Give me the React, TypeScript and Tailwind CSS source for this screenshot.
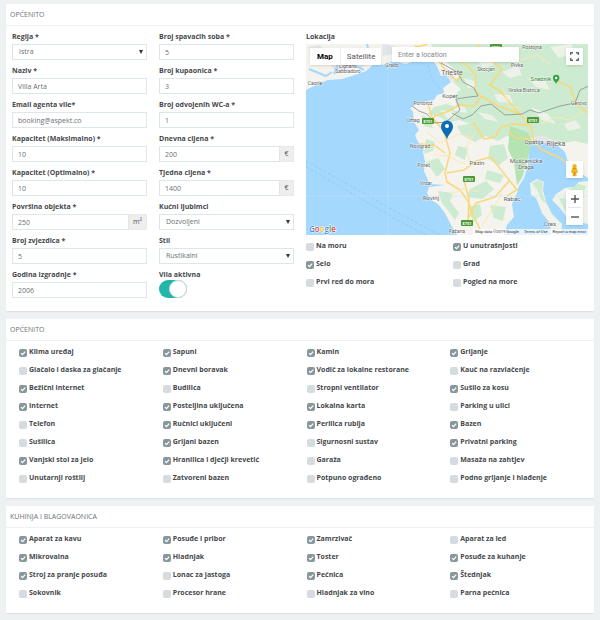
import { useId, type ReactNode } from 'react';

type Option = [label: string, checked: boolean];

const LOCATION: Option[] = [
  ['Na moru', false], ['U unutrašnjosti', true],
  ['Selo', true], ['Grad', false],
  ['Prvi red do mora', false], ['Pogled na more', false],
];

const GENERAL: Option[] = [
  ['Klima uređaj', true], ['Sapuni', true], ['Kamin', true], ['Grijanje', true],
  ['Glačalo i daska za glačanje', false], ['Dnevni boravak', true], ['Vodič za lokalne restorane', true], ['Kauč na razvlačenje', false],
  ['Bežični internet', true], ['Budilica', false], ['Stropni ventilator', false], ['Sušilo za kosu', true],
  ['Internet', true], ['Posteljina uključena', true], ['Lokalna karta', true], ['Parking u ulici', false],
  ['Telefon', false], ['Ručnici uključeni', true], ['Perilica rublja', true], ['Bazen', true],
  ['Sušilica', false], ['Grijani bazen', true], ['Sigurnosni sustav', false], ['Privatni parking', true],
  ['Vanjski stol za jelo', true], ['Hranilica i dječji krevetić', true], ['Garaža', false], ['Masaža na zahtjev', false],
  ['Unutarnji roštilj', false], ['Zatvoreni bazen', false], ['Potpuno ograđeno', false], ['Podno grijanje i hlađenje', false],
];

const KITCHEN: Option[] = [
  ['Aparat za kavu', true], ['Posuđe i pribor', true], ['Zamrzivač', true], ['Aparat za led', false],
  ['Mikrovalna', true], ['Hladnjak', true], ['Toster', true], ['Posuđe za kuhanje', true],
  ['Stroj za pranje posuđa', true], ['Lonac za jastoga', false], ['Pećnica', true], ['Štednjak', true],
  ['Sokovnik', false], ['Procesor hrane', false], ['Hladnjak za vino', false], ['Parna pećnica', false],
];

function Panel({ title, children }: { title: string; children: ReactNode }) {
  return (
    <section className="bg-white shadow-[0_1px_1px_#dde3e5]">
      <h2 className="h-[22px] border-b border-[#edf1f2] px-1 text-[7px] leading-[21px] font-normal text-[#6c7275] uppercase">{title}</h2>
      {children}
    </section>
  );
}

function Field({ label, value, unit }: { label: string; value: string; unit?: ReactNode }) {
  const id = useId();
  return (
    <div>
      <label htmlFor={id} className="block pb-0.5 text-[7px] leading-[10px] font-bold">{label}</label>
      <div className="flex h-4">
        <input id={id} defaultValue={value} className="h-4 w-full min-w-0 flex-1 border border-[#dde6e9] bg-white px-[5px] text-[7px] text-[#6b7073] outline-none" />
        {unit && <span className="flex min-w-[14px] items-center justify-center border border-l-0 border-[#e6eaec] bg-[#eeeeee] px-1 text-[7px] text-[#555]">{unit}</span>}
      </div>
    </div>
  );
}

function SelectField({ label, options }: { label: string; options: string[] }) {
  const id = useId();
  return (
    <div>
      <label htmlFor={id} className="block pb-0.5 text-[7px] leading-[10px] font-bold">{label}</label>
      <div className="relative h-4">
        <select id={id} className="block h-4 w-full appearance-none border border-[#dde6e9] bg-white pt-px pr-3 pl-1.5 text-[7px] text-[#6b7073] outline-none">
          {options.map((o) => <option key={o}>{o}</option>)}
        </select>
        <svg viewBox="0 0 4 4" className="pointer-events-none absolute top-1.5 right-1 size-1 fill-[#333]"><path d="M0 0h4L2 4z" /></svg>
      </div>
    </div>
  );
}

function Tick({ option: [label, checked] }: { option: Option }) {
  return (
    <label className="flex h-[18px] items-center gap-0.5 text-[7px] font-bold whitespace-nowrap">
      <span className="relative mt-0.5 size-2 shrink-0">
        <input type="checkbox" defaultChecked={checked} className="peer block size-2 appearance-none rounded-[2px] bg-[#d5dbde] checked:bg-[#87979c]" />
        <svg viewBox="0 0 8 8" className="pointer-events-none absolute inset-0 hidden size-2 peer-checked:block"><path d="M2 4.1l1.5 1.5L6.2 2.7" fill="none" stroke="#fff" strokeWidth="1.2" /></svg>
      </span>
      {label}
    </label>
  );
}

function TickGrid({ options }: { options: Option[] }) {
  return (
    <div className="grid grid-cols-4 pt-0.5 pb-[11px] pl-[13px]">
      {options.map((o) => <Tick key={o[0]} option={o} />)}
    </div>
  );
}

const PLACES: [x: number, y: number, name: string, size?: number][] = [
  [42, 24, 'Lignano'], [42, 29, 'Sabbiadoro'], [9, 41, 'Caorle'], [86, 23, 'Grado'], [146, 31, 'Trieste', 7],
  [144, 54, 'Koper', 6], [117, 61, 'Portorož'], [107, 78, 'Umag'], [114, 104, 'Novigrad'], [118, 123, 'Poreč'],
  [120, 141, 'Vrsar'], [125, 156, 'Rovinj', 6], [171, 121, 'Pazin', 6], [206, 157, 'Rabac', 6], [228, 100, 'Opatija', 6],
  [250, 102, 'Rijeka', 7], [220, 119, 'Mošćenička', 6], [220, 125, 'Draga', 6], [244, 182, 'Cres', 6],
  [180, 27, 'Škocjan'], [211, 23, 'Pivka'], [218, 48, 'Ilirska Bistrica'], [226, 5, 'Postojna'], [273, 61, 'Gerovo'], [151, 189, 'Fažana'],
];

const SHIELDS = [[122, 79], [190, 5], [227, 78], [163, 137], [161, 181]];

function MapDrawing() {
  return (
    <svg viewBox="0 0 282 191" preserveAspectRatio="xMidYMid slice" className="absolute inset-0 size-full" role="img" aria-label="Istra">
      <rect width="282" height="191" fill="#a5d8fd" />
      <path d="M0 0H282V134L270 126 262 118 259 108 252 102 243 99 234 94 227 96 223 105 222 121 218 134 213 142 211 149 206 160 208 173 201 181 198 191H151L144 179 139 169 132 160 125 156 121 149 123 143 139 141 124 140 121 134 118 127 119 118 117 108 118 104 112 98 109 91 113 86 108 78 107 68 104 64 112 59 128 56 131 51 138 49 137 44 145 38 140 31 135 32 131 22 124 14 112 16 100 20 87 17 77 21 70 18 60 27 49 31 36 35 22 36 12 40 0 46Z" fill="#f4f3ee" />
      <g fill="#cdebd0">
        <path d="M125 0H282V100L268 97 258 99 246 96 237 92 226 94 218 98 206 95 197 88 186 84 176 88 164 80 153 76 142 79 134 73 122 70 128 63 140 60 151 63 148 52 155 45 147 38 154 32 146 23 137 15 130 8Z" />
        <path d="M204 82 221 88 226 96 221 118 216 134 211 141 208 118 202 105Z" fill="#b6e3b2" />
        <path d="M151 82 168 79 188 83 203 91 192 97 180 92 169 98 156 91ZM116 71l8 4 3 9-9-2zM120 95l9 3-2 9-9 3zM120 118l12-4 7 11-8 8zM132 147l15 2-3 8 9 12-4 7-13-17zM152 102l10 2-3 12-10-5zM164 145l16-8 8 8-12 10-15-2zM184 102l14-2 4 14-9 7-11-6zM181 126l17 5-4 8-15-4zM162 163l12-3 2 11-9 7zM184 161l16 2-3 14-9-3z" />
      </g>
      <g fill="#f2f3ed" opacity=".85">
        <path d="M170 14l14-3 5 9-12 4zM196 28l16-6 4 9-12 3zM222 34l17 3 5 9-14-3zM188 50l16 1 3 8-15-1zM225 63l17 7 8 10-14-4zM244 3l22-3 1 9-14 5zM148 61l10 2 4 6-14-2zM258 80l12-4 5 8-13 3zM158 34l10 3 3 8-9-1zM134 66l12 1 6 5-10 3zM172 68l14 3 6 7-13-3zM202 9l9 3-2 7-8-2z" />
      </g>
      <g fill="#e4e5e6">
        <path d="M1 3l13-2 6 9-9 4zM24 20l13-3 4 9-10 4zM51 11l8 1 1 9-6 3zM76 0l13 2-3 8-9 2zM139 23l8 6 2 11-8-7zM229 91l10 2 13 7-4 2-18-6z" />
      </g>
      <g fill="none" stroke="#a5d8fd" strokeWidth="2">
        <path d="M3 25l17 7 6-4M28 30l5-12M48 21l10 5M61 0l2 9" />
      </g>
      <path d="M224 139l7-4 7 3-1 8 3 12 6 12 10 10-1 11H245l-1-12-8-10-6-15-5-3zM282 137l-9 1-5 5-9 1-9 6-4 6 7 7 7 9 12 6 10 2z" fill="#eff3ea" />
      <path d="M226 139l7-3 4 3-1 10 4 11-5-5-4-10zM263 146l9-6 8 2-3 9zM253 154l10 1 4 10-8 2z" fill="#cdebd0" />
      <g fill="none" stroke="#f9d877" strokeWidth="1.5" strokeLinejoin="round">
        <path d="M109 2l13 4 8 7 9 13 12 11 6-8M149 12l10 8 11 11-1 16 6 5 17 10 22 8 11 13 3 15 8 8 18 8 13 9 10 10M103 5l19-5M170 0l8 8M176 52l-8 10-15-1-10 6-14 5-6 9M192 2l-6 15 10 8-12 16 10 6 12 14 10 12M248 36l16 7 7 18 11 8" />
        <path d="M122 60l4 13 11 13 3 9 4 14-5 20 2 9 13 8 8 11 7 18 8 16M114 100l14 1 11 8M141 129l17-3 12-9 15-4 26 33M158 137l5 18-1 21M201 152l11-7M167 78l11 17 11-2 6-10 12-3 16 1M202 87l8 7 15 1M162 175l8-16 19-6 14-16" />
      </g>
      <g fill="none" stroke="#fbe9b1" strokeWidth="1">
        <path d="M121 88l13 11 19-9 15 4M128 111l13 1 18 8M143 151l14-6 16 3M164 121l-4-18 10-16M193 5l23 11 15-5 13 9M216 65l-13-3-7-20M235 80l15-7 14 3 13-8M176 182l13-21 7-13" />
      </g>
      <path d="M135 19l16 9 6 10 11 6 4 8-9 1-13 2 4 11-14 12-11 1-8-9-8-3-7-5M146 69l11 6 9-4 9-9 10-2 14 11 17-1 8-4 9 3 21-7 15-3 5-13 13-6 6-13 10-5 4 16 5 4" fill="none" stroke="#888e8d" strokeWidth=".8" />
      <path d="M0 117l45 25 51 29 38 20M0 123l45 26 50 29 25 13M122 21l4 15 9 10" fill="none" stroke="#83c2ef" strokeWidth=".6" strokeDasharray="3 2" />
      <path d="M82 0v191M0 152h282" stroke="#c2e3fb" strokeWidth=".5" />
      {SHIELDS.map(([x, y]) => (
        <g key={`${x}-${y}`}>
          <rect x={x - 6} y={y - 5} width="12" height="6" rx="1" fill="#4a9b38" />
          <text x={x} y={y} textAnchor="middle" fontSize="4" fontWeight="700" fill="#fff">E751</text>
        </g>
      ))}
      <g textAnchor="middle" fill="#5d6164" stroke="#fff" strokeWidth="1" strokeOpacity=".7" paintOrder="stroke">
        {PLACES.map(([x, y, name, size]) => <text key={name} x={x} y={y} fontSize={size ?? 5}>{name}</text>)}
        <text x="235" y="37" fontSize="6" fill="#34853b">Snežnik</text>
      </g>
      <path d="M250 40c-1-3-3-3-3-6a3.200 3.200 0 0 1 6.400 0c0 3-2.400 3-3.400 6z" fill="#34a047" />
      <circle cx="250.200" cy="34" r="1.200" fill="#fff" />
      <path d="M141 95.500c-1-5-6-8-6-13a6 6 0 0 1 12 0c0 5-5 8-6 13z" fill="#0b6db7" />
      <circle cx="141" cy="82" r="2" fill="#fff" />
    </svg>
  );
}

function LocationMap() {
  return (
    <div className="relative h-[191px] overflow-hidden font-[Roboto,sans-serif]">
      <MapDrawing />
      <div className="absolute top-1 left-1 flex h-[17px] bg-white text-[8px] shadow-sm">
        <button type="button" className="border-r border-[#eee] px-[7px] font-bold text-black">Map</button>
        <button type="button" className="px-1.5 text-[#565656]">Satellite</button>
      </div>
      <input aria-label="Enter a location" placeholder="Enter a location" className="absolute top-[3px] left-[86px] h-[15px] w-[127px] bg-white px-1.5 text-[7px] shadow-sm outline-none placeholder:text-[#858585]" />
      <button type="button" aria-label="Fullscreen" className="absolute top-1 right-[5px] grid size-[17px] place-items-center bg-white shadow-sm">
        <svg viewBox="0 0 9 9" className="size-[9px]" fill="none" stroke="#666" strokeWidth="1.400"><path d="M.7 3V.7H3M6 .7h2.300V3M8.300 6v2.300H6M3 8.300H.7V6" /></svg>
      </button>
      <div className="absolute right-[5px] bottom-[10px] flex flex-col gap-3">
        <button type="button" aria-label="Street View" className="grid size-[17px] place-items-center bg-white shadow-sm">
          <svg viewBox="0 0 9 14" className="h-[14px] w-[9px]"><ellipse cx="4.500" cy="12.500" rx="3" ry="1" fill="#d8d8d8" /><path d="M2 5.500Q4.500 3.500 7 5.500L8 9.500 6.500 10 6 13H3L2.500 10 1 9.500Z" fill="#f5b323" /><circle cx="4.500" cy="3.200" r="2.200" fill="#f5b323" /><path d="M2.800 5Q4.500 6.500 6.200 5M4.500 9v3.500" fill="none" stroke="#c67d18" strokeWidth=".8" /></svg>
        </button>
        <div className="flex flex-col bg-white shadow-sm">
          <button type="button" aria-label="Zoom in" className="grid size-[17px] place-items-center"><svg viewBox="0 0 8 8" className="size-2" stroke="#555" strokeWidth="1.400"><path d="M4 0v8M0 4h8" /></svg></button>
          <span className="mx-0.5 h-px bg-[#e6e6e6]" />
          <button type="button" aria-label="Zoom out" className="grid size-[17px] place-items-center"><svg viewBox="0 0 8 8" className="size-2" stroke="#555" strokeWidth="1.400"><path d="M0 4h8" /></svg></button>
        </div>
      </div>
      <svg viewBox="0 0 30 12" className="absolute bottom-0 left-0.5 h-3 w-[30px]" role="img" aria-label="Google">
        <g fontFamily="Open Sans, sans-serif" fontSize="8" fontWeight="600" stroke="#fff" strokeWidth="1" paintOrder="stroke">
          <text x="1" y="9"><tspan fill="#4285f4">G</tspan><tspan fill="#ea4335">o</tspan><tspan fill="#fbbc05">o</tspan><tspan fill="#4285f4">g</tspan><tspan fill="#34a853">l</tspan><tspan fill="#ea4335">e</tspan></text>
        </g>
      </svg>
      <div className="absolute right-0 bottom-0 flex h-[6px] items-center gap-[5px] bg-white/70 px-0.5 text-[4px] leading-[6px] text-[#333]">
        <span>Map data ©2019 Google</span>
        <a href="#terms">Terms of Use</a>
        <a href="#report">Report a map error</a>
      </div>
    </div>
  );
}

export default function App() {
  return (
    <main className="flex min-h-screen flex-col gap-2 bg-[#edf1f2] px-1.5 pt-1 pb-[7px] font-['Open_Sans',sans-serif] text-[#45494c]">
      <Panel title="Općenito">
        <form className="grid grid-cols-[135fr_135fr_282fr] gap-3 px-1.5 pt-1.5 pb-[13px]">
          <div className="flex flex-col gap-1.5">
            <SelectField label="Regija *" options={['Istra', 'Kvarner', 'Dalmacija']} />
            <Field label="Naziv *" value="Villa Arta" />
            <Field label="Email agenta vile*" value="booking@aspekt.co" />
            <Field label="Kapacitet (Maksimalno) *" value="10" />
            <Field label="Kapacitet (Optimalno) *" value="10" />
            <Field label="Površina objekta *" value="250" unit="m²" />
            <Field label="Broj zvjezdica *" value="5" />
            <Field label="Godina izgradnje *" value="2006" />
          </div>
          <div className="flex flex-col gap-1.5">
            <Field label="Broj spavaćih soba *" value="5" />
            <Field label="Broj kupaonica *" value="3" />
            <Field label="Broj odvojenih WC-a *" value="1" />
            <Field label="Dnevna cijena *" value="200" unit="€" />
            <Field label="Tjedna cijena *" value="1400" unit="€" />
            <SelectField label="Kućni ljubimci" options={['Dozvoljeni', 'Nisu dozvoljeni']} />
            <SelectField label="Stil" options={['Rustikalni', 'Moderni']} />
            <div>
              <label htmlFor="active" className="block text-[7px] leading-[10px] font-bold">Vila aktivna</label>
              <input id="active" type="checkbox" role="switch" defaultChecked className="block h-[18px] w-7 appearance-none rounded-full bg-[#d3dadd] before:block before:size-[18px] before:rounded-full before:border before:border-[#d3dadd] before:bg-white checked:bg-[#23b7aa] checked:before:ml-[10px]" />
            </div>
          </div>
          <div>
            <h3 className="pb-0.5 text-[7px] leading-[10px] font-bold">Lokacija</h3>
            <LocationMap />
            <div className="grid grid-cols-2 gap-x-3 pt-0.5">
              {LOCATION.map((o) => <Tick key={o[0]} option={o} />)}
            </div>
          </div>
        </form>
      </Panel>
      <Panel title="Općenito"><TickGrid options={GENERAL} /></Panel>
      <Panel title="Kuhinja i blagovaonica"><TickGrid options={KITCHEN} /></Panel>
    </main>
  );
}
